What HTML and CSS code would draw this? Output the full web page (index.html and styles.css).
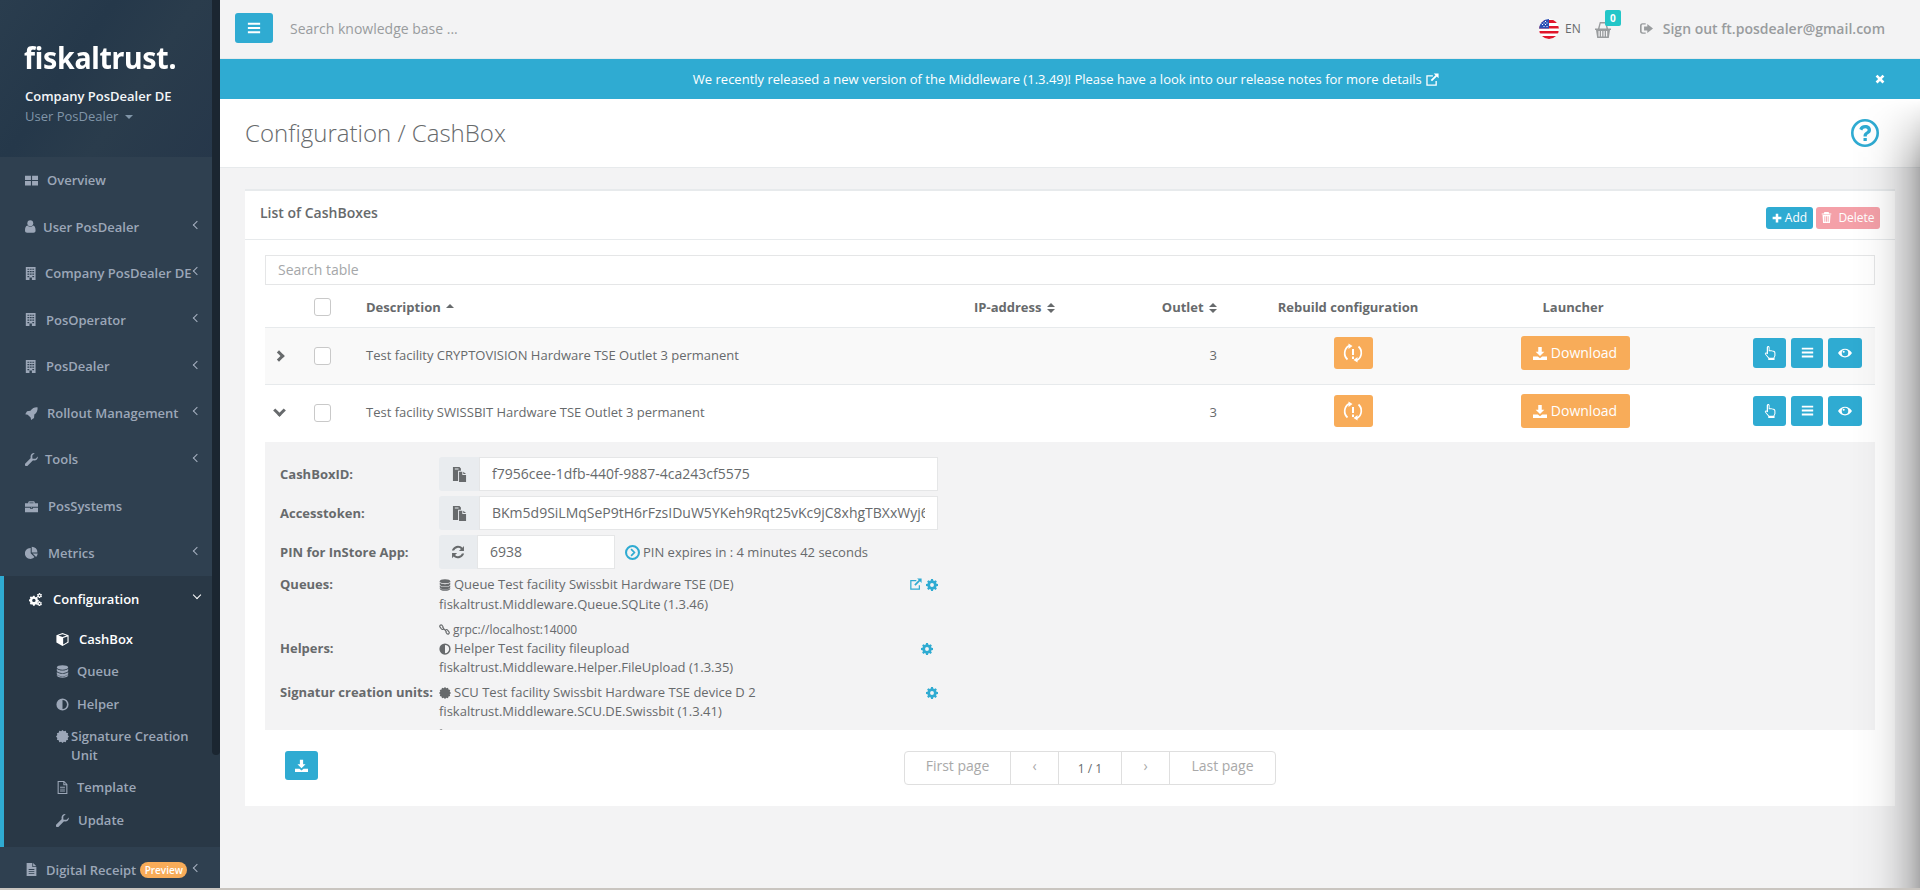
FILE: index.html
```html
<!DOCTYPE html>
<html>

<head>
    <meta charset="utf-8">
    <title>Configuration / CashBox</title>
    <link rel="stylesheet" href="styles.css">
</head>

<body>
    <!-- icon set -->
    <svg class="icon-defs" xmlns="http://www.w3.org/2000/svg">
        <symbol id="i-bars" viewBox="0 0 16 16" preserveAspectRatio="xMinYMid meet"><path d="M1 2h14v2.400H1zM1 6.800h14v2.400H1zM1 11.600h14V14H1z"/></symbol>
        <symbol id="i-th" viewBox="0 0 16 16" preserveAspectRatio="xMinYMid meet"><path d="M0 2h7.300v5.400H0zM8.700 2H16v5.400H8.700zM0 8.700h7.300V14H0zM8.700 8.700H16V14H8.700z"/></symbol>
        <symbol id="i-user" viewBox="0 0 16 16" preserveAspectRatio="xMinYMid meet"><circle cx="6.500" cy="4" r="3.600"/><path d="M0 13c0-3.600 1-6 3-6.200 1 1 2.200 1.500 3.500 1.500S9 7.800 10 6.800c2 .2 3 2.600 3 6.200 0 1.700-1 2.800-2.700 2.800H2.700C1 15.800 0 14.700 0 13z"/></symbol>
        <symbol id="i-building" viewBox="0 0 16 16" preserveAspectRatio="xMinYMid meet"><path fill-rule="evenodd" d="M1 0h12v16H1zM3 2v1.500h2.200V2zM6 2v1.500h2.200V2zM9 2v1.500h2.200V2zM3 5v1.500h2.200V5zM6 5v1.500h2.200V5zM9 5v1.500h2.200V5zM3 8v1.500h2.200V8zM6 8v1.500h2.200V8zM9 8v1.500h2.200V8zM3 11v1.500h2.200V11zM9 11v1.500h2.200V11zM5.500 13v3h3v-3z"/></symbol>
        <symbol id="i-rocket" viewBox="0 0 16 16" preserveAspectRatio="xMinYMid meet"><path d="M15.500.5c.3 3.500-1 6.500-4 8.800l-.4 4.200L7.500 16l-.6-3-3.600-3.600-3-.6L2.500 5.100l4.200-.4C9 1.500 12 .2 15.500.5z"/></symbol>
        <symbol id="i-wrench" viewBox="0 0 16 16" preserveAspectRatio="xMinYMid meet"><path d="M15.800 4.200c.4 2.600-1.600 5-4.300 5-.6 0-1.100-.1-1.600-.3L3.200 15.600c-.8.800-2 .8-2.800 0s-.8-2 0-2.800L7.100 6.100c-.2-.5-.3-1-.3-1.600C6.800 1.800 9.200-.2 11.800.2L9 3v3.500l.5.500H13z"/></symbol>
        <symbol id="i-briefcase" viewBox="0 0 16 16" preserveAspectRatio="xMinYMid meet"><path fill-rule="evenodd" d="M5 1.500h6l1 1V4h4v4.400H0V4h4V2.500zM5.500 3v1h5V3zM0 9.500h6.500V11h3V9.500H16V15H0zM7.500 8.800h1V10h-1z"/></symbol>
        <symbol id="i-pie" viewBox="0 0 16 16" preserveAspectRatio="xMinYMid meet"><path d="M7 2.500V9l4.600 4.600A6.700 6.700 0 1 1 7 2.500zM8.300 8V.8a7 7 0 0 1 7 7.200zM9.300 9.300h6.400a7 7 0 0 1-2 4.200z"/></symbol>
        <symbol id="i-gears" viewBox="0 0 16 16" preserveAspectRatio="xMinYMid meet"><path fill-rule="evenodd" d="M5 3.500h2l.3 1.300 1.200.5 1.100-.7 1.400 1.400-.7 1.100.5 1.200 1.300.3v2l-1.300.3-.5 1.200.7 1.100-1.400 1.400-1.100-.7-1.200.5-.3 1.300H5l-.3-1.300-1.200-.5-1.100.7L1 12.700l.7-1.100-.5-1.200L0 10.100v-2l1.200-.3.5-1.200L1 5.500l1.400-1.400 1.100.7 1.200-.5zM6 7a2.100 2.100 0 1 0 0 4.200A2.100 2.100 0 0 0 6 7z"/><path fill-rule="evenodd" d="M13 0l.8.200.1.900.8.500.8-.3.500.8-.6.6v1l.6.600-.5.800-.8-.3-.8.500-.1.900H12l-.1-.9-.8-.5-.8.300-.5-.8.600-.6v-1l-.6-.6.500-.8.800.3.800-.5.100-.9zM13 2.300a1 1 0 1 0 0 2 1 1 0 0 0 0-2zM13 10l.8.200.1.900.8.500.8-.3.500.8-.6.600v1l.6.600-.5.800-.8-.3-.8.500-.1.900H12l-.1-.9-.8-.5-.8.300-.5-.8.600-.6v-1l-.6-.6.500-.8.800.3.800-.5.100-.9zM13 12.300a1 1 0 1 0 0 2 1 1 0 0 0 0-2z"/></symbol>
        <symbol id="i-cube" viewBox="0 0 16 16" preserveAspectRatio="xMinYMid meet"><path fill-rule="evenodd" d="M8 0l7.500 2.700v9.100L8 16 .5 11.800V2.700zM2.900 3.200L8 5l5.100-1.800L8 1.400zM8.800 6.300v7.800l5.300-3V4.400z"/></symbol>
        <symbol id="i-database" viewBox="0 0 16 16" preserveAspectRatio="xMinYMid meet"><ellipse cx="8" cy="3" rx="7" ry="2.800"/><path d="M1 4.700c1 1.500 4 2.200 7 2.200s6-.7 7-2.200v2.500c0 1.500-3 2.800-7 2.800s-7-1.300-7-2.800zM1 8.500c1 1.500 4 2.200 7 2.200s6-.7 7-2.200V11c0 1.500-3 2.800-7 2.800S1 12.500 1 11zM1 11.900c1 1.500 4 2.200 7 2.200s6-.7 7-2.200v1c0 1.500-3 2.800-7 2.800s-7-1.300-7-2.800z"/></symbol>
        <symbol id="i-adjust" viewBox="0 0 16 16" preserveAspectRatio="xMinYMid meet"><path fill-rule="evenodd" d="M8 .5a7.500 7.500 0 1 1 0 15 7.500 7.500 0 0 1 0-15zM8 2.500v11a5.500 5.500 0 0 0 0-11z"/></symbol>
        <symbol id="i-cert" viewBox="0 0 16 16" preserveAspectRatio="xMinYMid meet"><path d="M16 8L14.380 9.710 14.930 12 12.670 12.670 12 14.930 9.710 14.380 8 16 6.290 14.380 4 14.930 3.330 12.670 1.070 12 1.620 9.710 0 8 1.620 6.290 1.070 4 3.330 3.330 4 1.070 6.290 1.620 8 0 9.710 1.620 12 1.070 12.670 3.330 14.930 4 14.380 6.290z"/></symbol>
        <symbol id="i-file-o" viewBox="0 0 16 16" preserveAspectRatio="xMinYMid meet"><path fill-rule="evenodd" d="M2 0h8l4 4v12H2zM3.300 1.300v13.400h9.400V5.200H9V1.300zM10.300 1.800v2.100h2.100zM5 7.200h6v1H5zM5 9.500h6v1H5zM5 11.800h6v1H5z"/></symbol>
        <symbol id="i-file" viewBox="0 0 16 16" preserveAspectRatio="xMinYMid meet"><path fill-rule="evenodd" d="M2 0h7v5h5v11H2zM10 0l4 4h-4zM4.500 7.500v1h7v-1zM4.500 10v1h7v-1zM4.500 12.500v1h7v-1z"/></symbol>
        <symbol id="i-copy" viewBox="0 0 16 16" preserveAspectRatio="xMinYMid meet"><path fill-rule="evenodd" d="M1 0h7l1.500 1.500V4H6.500v11H1zM3 1.500v1.200h4V1.500zM7.500 5H11v3.500h4V16H7.500zM12 5l3 2.500h-3z"/></symbol>
        <symbol id="i-refresh" viewBox="0 0 16 16" preserveAspectRatio="xMinYMid meet"><path d="M14.800 1v5.800H9l2.400-2.200A4.800 4.800 0 0 0 3.500 6.300H1A7.200 7.200 0 0 1 13 3zM1.200 15V9.200H7l-2.400 2.200a4.800 4.800 0 0 0 7.900-1.700H15A7.200 7.200 0 0 1 3 13z"/></symbol>
        <symbol id="i-link" viewBox="0 0 16 16" preserveAspectRatio="xMinYMid meet"><path fill="none" stroke="currentColor" stroke-width="1.600" d="M6.500 5L4.300 1.800a2 2 0 0 0-3 2.500L3.500 7.200a2 2 0 0 0 3 .1M9.500 11l2.200 3.200a2 2 0 0 0 3-2.500l-2.200-2.900a2 2 0 0 0-3-.1M5 4.500l6 7"/></symbol>
        <symbol id="i-clock" viewBox="0 0 16 16" preserveAspectRatio="xMinYMid meet"><path fill-rule="evenodd" d="M8 0a8 8 0 1 1 0 16A8 8 0 0 1 8 0zM8 2.200a5.800 5.800 0 1 0 0 11.600A5.800 5.800 0 0 0 8 2.200z"/><path fill="none" stroke="currentColor" stroke-width="1.800" d="M6.500 4.500L10 8l-3.500 3.500"/></symbol>
        <symbol id="i-gear" viewBox="0 0 16 16" preserveAspectRatio="xMinYMid meet"><path fill-rule="evenodd" d="M6.700 0h2.600l.4 2 1.300.6 1.700-1.100 1.800 1.800-1.100 1.700.6 1.300 2 .4v2.600l-2 .4-.6 1.300 1.100 1.700-1.800 1.800-1.700-1.100-1.300.6-.4 2H6.700l-.4-2-1.300-.6-1.700 1.100-1.800-1.800 1.100-1.700-.6-1.300-2-.4V6.700l2-.4.6-1.300-1.100-1.700 1.800-1.800L5 2.600l1.300-.6zM8 5.400a2.600 2.600 0 1 0 0 5.200 2.600 2.600 0 0 0 0-5.200z"/></symbol>
        <symbol id="i-extern" viewBox="0 0 16 16" preserveAspectRatio="xMinYMid meet"><path d="M2.500 2.500H9v1.500H3v9h9V9h1.500v5.500h-12v-12z"/><path d="M10 .5h5.500V6l-2-2L8 9.500 6.500 8 12 2.500z"/></symbol>
        <symbol id="i-download" viewBox="0 0 16 16" preserveAspectRatio="xMinYMid meet"><path d="M6 1h4v5.500h3L8 11.500 3 6.500h3zM0 12h5.500L8 14l2.500-2H16v4H0z"/></symbol>
        <symbol id="i-hand" viewBox="0 0 16 16" preserveAspectRatio="xMinYMid meet"><path fill-rule="evenodd" d="M6 0c.9 0 1.500.7 1.500 1.600v3.200c1-.2 3.800.3 4.700.6 1.300.4 2 1.300 2 2.600v3l-1 2v3H6v-2L2.500 9.700C1.500 8.400 2.800 6.900 4.300 7.800V1.600C4.500.7 5.100 0 6 0zM5.700 1.600v7.700L3.600 8.500c-.5-.2-.8.2-.4.7l3.800 4.300h5l1-2.400V8c0-.8-.5-1.300-1.200-1.500-1-.3-3.500-.7-5.300-.5V1.600c0-.3-.5-.3-.8 0z"/></symbol>
        <symbol id="i-eye" viewBox="0 0 16 16" preserveAspectRatio="xMinYMid meet"><path fill-rule="evenodd" d="M8 3c3.300 0 6.200 2 8 5-1.800 3-4.700 5-8 5s-6.200-2-8-5c1.800-3 4.700-5 8-5zM8 4.300a3.700 3.700 0 1 0 0 7.400 3.700 3.700 0 0 0 0-7.400zM6.500 5.300a1.200 1.200 0 1 1 0 2.400 1.200 1.200 0 0 1 0-2.400z"/></symbol>
        <symbol id="i-plus" viewBox="0 0 16 16" preserveAspectRatio="xMinYMid meet"><path d="M6 1h4v5h5v4h-5v5H6v-5H1V6h5z"/></symbol>
        <symbol id="i-trash" viewBox="0 0 16 16" preserveAspectRatio="xMinYMid meet"><path fill-rule="evenodd" d="M5 0h6l1 2h3v1.500H1V2h3zM2.200 4.500h11.600L13 16H3zM5 6v8h1.200V6zM7.400 6v8h1.200V6zM9.800 6v8H11V6z"/></symbol>
        <symbol id="i-close" viewBox="0 0 16 16" preserveAspectRatio="xMinYMid meet"><path d="M4 1l4 4 4-4 3 3-4 4 4 4-3 3-4-4-4 4-3-3 4-4-4-4z"/></symbol>
        <symbol id="i-help" viewBox="0 0 28 28" preserveAspectRatio="xMinYMid meet"><path fill-rule="evenodd" d="M14 0a14 14 0 1 1 0 28A14 14 0 0 1 14 0zM14 2.600a11.400 11.400 0 1 0 0 22.800 11.400 11.400 0 0 0 0-22.800zM14.200 6c3.400 0 5.800 2 5.800 4.900 0 2-1 3.100-2.700 4.200-1.200.8-1.500 1.200-1.500 2.400h-3.300c0-2.100.6-3.200 2.300-4.400 1.300-.9 1.800-1.300 1.800-2.100 0-1-.9-1.700-2.300-1.700-1.500 0-2.500.8-3 2.200L8.300 10C9.100 7.500 11.200 6 14.200 6zM12.500 19h3.300v3h-3.300z"/></symbol>
        <symbol id="i-signout" viewBox="0 0 16 16" preserveAspectRatio="xMinYMid meet"><path fill-rule="evenodd" d="M3 1.500h4V3H3.500c-.8 0-1.500.7-1.500 1.500v7c0 .8.700 1.500 1.500 1.500H7v1.500H3c-1.700 0-3-1.300-3-3v-7c0-1.700 1.300-3 3-3z"/><path d="M9 2.500L16 8l-7 5.500v-3H5v-5h4z"/></symbol>
        <symbol id="i-basket" viewBox="0 0 16 16" preserveAspectRatio="xMinYMid meet"><path fill-rule="evenodd" d="M4.800 0h6.400l1.800 6.500H16V8h-1l-1.200 8H2.200L1 8H0V6.500h3zM5.700 1.500L4.500 6.500h7l-1.200-5zM3.500 9v5.500h1.200V9zM6 9v5.500h1.200V9zM8.500 9v5.500h1.200V9zM11 9v5.500h1.200V9z"/></symbol>
        <symbol id="i-rebuild" viewBox="0 0 20 20" preserveAspectRatio="xMinYMid meet"><path d="M9 6h2v6H9zM9 13.500h2V16H9zM5.500 .5L9.500 3 5.500 6zM14.500 14L10.500 17l4 2.500z"/><path fill="none" stroke="currentColor" stroke-width="1.700" d="M4.500 16.500A8.500 8.500 0 0 1 6 2.800M15.500 3.500A8.500 8.500 0 0 1 14 17.200"/></symbol>
    </svg>

    <div class="page">
        <nav class="sidebar">
            <div class="nav-header">
                <div class="logo">fiskaltrust.</div>
                <div class="company">Company PosDealer DE</div>
                <div class="profile">User PosDealer <span class="caret"></span></div>
            </div>
            <ul class="nav">
                <li><a><svg class="nav-icon" width="22" height="13"><use href="#i-th"/></svg>Overview</a></li>
                <li><a><svg class="nav-icon" width="18" height="13"><use href="#i-user"/></svg>User PosDealer<span class="angle"></span></a></li>
                <li><a><svg class="nav-icon" width="20" height="13"><use href="#i-building"/></svg>Company PosDealer DE<span class="angle"></span></a></li>
                <li><a><svg class="nav-icon" width="21" height="13"><use href="#i-building"/></svg>PosOperator<span class="angle"></span></a></li>
                <li><a><svg class="nav-icon" width="21" height="13"><use href="#i-building"/></svg>PosDealer<span class="angle"></span></a></li>
                <li><a><svg class="nav-icon" width="22" height="13"><use href="#i-rocket"/></svg>Rollout Management<span class="angle"></span></a></li>
                <li><a><svg class="nav-icon" width="20" height="13"><use href="#i-wrench"/></svg>Tools<span class="angle"></span></a></li>
                <li><a><svg class="nav-icon" width="23" height="13"><use href="#i-briefcase"/></svg>PosSystems</a></li>
                <li><a><svg class="nav-icon" width="23" height="13"><use href="#i-pie"/></svg>Metrics<span class="angle"></span></a></li>
                <li class="active">
                    <a><svg class="nav-icon" width="24" height="13"><use href="#i-gears"/></svg>Configuration<span class="angle angle-open"></span></a>
                    <ul class="subnav">
                        <li class="current"><a><svg class="nav-icon" width="23" height="13"><use href="#i-cube"/></svg>CashBox</a></li>
                        <li><a><svg class="nav-icon" width="21" height="13"><use href="#i-database"/></svg>Queue</a></li>
                        <li><a><svg class="nav-icon" width="21" height="13"><use href="#i-adjust"/></svg>Helper</a></li>
                        <li><a><svg class="nav-icon" width="15" height="13"><use href="#i-cert"/></svg><span>Signature Creation Unit</span></a></li>
                        <li><a><svg class="nav-icon" width="21" height="13"><use href="#i-file-o"/></svg>Template</a></li>
                        <li><a><svg class="nav-icon" width="22" height="13"><use href="#i-wrench"/></svg>Update</a></li>
                    </ul>
                </li>
                <li><a><svg class="nav-icon" width="21" height="13"><use href="#i-file"/></svg>Digital Receipt<span class="badge-preview">Preview</span><span class="angle"></span></a></li>
            </ul>
            <div class="nav-scrollbar"></div>
        </nav>

        <div class="main">
            <div class="topbar">
                <a class="btn btn-info toggle"><svg width="14" height="14"><use href="#i-bars"/></svg></a>
                <div class="kb-search">Search knowledge base ...</div>
                <div class="top-right">
                    <svg class="flag" width="20" height="20" viewBox="0 0 20 20">
                        <clipPath id="flag-clip"><circle cx="10" cy="10" r="10"/></clipPath>
                        <g clip-path="url(#flag-clip)">
                            <rect width="20" height="20" fill="#fff"/>
                            <rect y="1" width="20" height="3" fill="#e0162b"/>
                            <rect y="7" width="20" height="2.500" fill="#e0162b"/>
                            <rect y="12" width="20" height="2.500" fill="#e0162b"/>
                            <rect y="17" width="20" height="3" fill="#e0162b"/>
                            <rect width="10" height="9.500" fill="#2a4fb5"/>
                            <path d="M3 2h1v1H3zM6 2h1v1H6zM3 5h1v1H3zM6 5h1v1H6zM1.500 3.500h1v1h-1zM4.500 3.500h1v1h-1zM7.500 3.500h1v1h-1zM4.500 7h1v1h-1zM7.500 7h1v1h-1z" fill="#fff"/>
                        </g>
                    </svg>
                    <span class="lang">EN</span>
                    <span class="cart"><svg width="16" height="16"><use href="#i-basket"/></svg><span class="cart-count">0</span></span>
                    <span class="signout"><svg width="13" height="13"><use href="#i-signout"/></svg>Sign out ft.posdealer@gmail.com</span>
                </div>
            </div>

            <div class="notice">
                <span>We recently released a new version of the Middleware (1.3.49)! Please have a look into our release notes for more details <svg width="14" height="14"><use href="#i-extern"/></svg></span>
                <svg class="notice-close" width="10" height="10"><use href="#i-close"/></svg>
            </div>

            <div class="page-heading">
                <h2>Configuration / CashBox</h2>
                <svg class="help" width="28" height="28"><use href="#i-help"/></svg>
            </div>

            <div class="content">
                <div class="card">
                    <div class="card-title">
                        <h5>List of CashBoxes</h5>
                        <div class="card-tools">
                            <a class="btn btn-info btn-xs btn-add"><svg width="10" height="10"><use href="#i-plus"/></svg>Add</a>
                            <a class="btn btn-danger btn-xs btn-delete"><svg width="11" height="11"><use href="#i-trash"/></svg>Delete</a>
                        </div>
                    </div>
                    <div class="card-body">
                        <div class="table-search">Search table</div>
                        <table class="grid">
                            <colgroup>
                                <col class="col-exp"><col class="col-check"><col class="col-desc"><col class="col-ip">
                                <col class="col-outlet"><col class="col-rebuild"><col class="col-launch"><col class="col-actions">
                            </colgroup>
                            <thead>
                                <tr>
                                    <th></th>
                                    <th><span class="check"></span></th>
                                    <th>Description <span class="sort-up"></span></th>
                                    <th>IP-address <span class="sort"></span></th>
                                    <th class="right">Outlet <span class="sort"></span></th>
                                    <th class="center">Rebuild configuration</th>
                                    <th class="center">Launcher</th>
                                    <th></th>
                                </tr>
                            </thead>
                            <tbody>
                                <tr class="striped">
                                    <td><span class="chev chev-right"></span></td>
                                    <td><span class="check"></span></td>
                                    <td>Test facility CRYPTOVISION Hardware TSE Outlet 3 permanent</td>
                                    <td></td>
                                    <td class="right">3</td>
                                    <td class="center"><a class="btn btn-warning btn-rebuild"><svg width="20" height="20"><use href="#i-rebuild"/></svg></a></td>
                                    <td class="center"><a class="btn btn-warning btn-download"><svg width="14" height="14"><use href="#i-download"/></svg> Download</a></td>
                                    <td class="actions">
                                        <a class="btn btn-info btn-act w33"><svg width="14" height="14"><use href="#i-hand"/></svg></a>
                                        <a class="btn btn-info btn-act w32"><svg width="13" height="13"><use href="#i-bars"/></svg></a>
                                        <a class="btn btn-info btn-act w34"><svg width="14" height="14"><use href="#i-eye"/></svg></a>
                                    </td>
                                </tr>
                                <tr>
                                    <td><span class="chev chev-down"></span></td>
                                    <td><span class="check"></span></td>
                                    <td>Test facility SWISSBIT Hardware TSE Outlet 3 permanent</td>
                                    <td></td>
                                    <td class="right">3</td>
                                    <td class="center"><a class="btn btn-warning btn-rebuild"><svg width="20" height="20"><use href="#i-rebuild"/></svg></a></td>
                                    <td class="center"><a class="btn btn-warning btn-download"><svg width="14" height="14"><use href="#i-download"/></svg> Download</a></td>
                                    <td class="actions">
                                        <a class="btn btn-info btn-act w33"><svg width="14" height="14"><use href="#i-hand"/></svg></a>
                                        <a class="btn btn-info btn-act w32"><svg width="13" height="13"><use href="#i-bars"/></svg></a>
                                        <a class="btn btn-info btn-act w34"><svg width="14" height="14"><use href="#i-eye"/></svg></a>
                                    </td>
                                </tr>
                            </tbody>
                        </table>

                        <div class="detail">
                            <div class="detail-inner">
                                <div class="field">
                                    <label>CashBoxID:</label>
                                    <div class="input-group">
                                        <span class="addon"><svg width="15" height="15"><use href="#i-copy"/></svg></span>
                                        <span class="value"><span>f7956cee-1dfb-440f-9887-4ca243cf5575</span></span>
                                    </div>
                                </div>
                                <div class="field">
                                    <label>Accesstoken:</label>
                                    <div class="input-group">
                                        <span class="addon"><svg width="15" height="15"><use href="#i-copy"/></svg></span>
                                        <span class="value"><span>BKm5d9SiLMqSeP9tH6rFzsIDuW5YKeh9Rqt25vKc9jC8xhgTBXxWyj6</span></span>
                                    </div>
                                </div>
                                <div class="field">
                                    <label>PIN for InStore App:</label>
                                    <div class="input-group pin">
                                        <span class="addon"><svg width="14" height="14"><use href="#i-refresh"/></svg></span>
                                        <span class="value"><span>6938</span></span>
                                    </div>
                                    <span class="pin-note"><svg width="15" height="15"><use href="#i-clock"/></svg>PIN expires in : 4 minutes 42 seconds</span>
                                </div>
                                <div class="item item-queue">
                                    <label>Queues:</label>
                                    <div class="item-text">
                                        <div><svg width="12" height="12"><use href="#i-database"/></svg>Queue Test facility Swissbit Hardware TSE (DE)</div>
                                        <div>fiskaltrust.Middleware.Queue.SQLite (1.3.46)</div>
                                        <div class="url"><svg width="11" height="11"><use href="#i-link"/></svg>grpc://localhost:14000</div>
                                    </div>
                                    <div class="item-tools"><svg width="13" height="13"><use href="#i-extern"/></svg><svg width="12" height="12"><use href="#i-gear"/></svg></div>
                                </div>
                                <div class="item item-helper">
                                    <label>Helpers:</label>
                                    <div class="item-text">
                                        <div><svg width="12" height="12"><use href="#i-adjust"/></svg>Helper Test facility fileupload</div>
                                        <div>fiskaltrust.Middleware.Helper.FileUpload (1.3.35)</div>
                                    </div>
                                    <div class="item-tools tools-inset"><svg width="12" height="12"><use href="#i-gear"/></svg></div>
                                </div>
                                <div class="item item-scu">
                                    <label>Signatur creation units:</label>
                                    <div class="item-text">
                                        <div><svg width="12" height="12"><use href="#i-cert"/></svg>SCU Test facility Swissbit Hardware TSE device D 2</div>
                                        <div>fiskaltrust.Middleware.SCU.DE.Swissbit (1.3.41)</div>
                                        <div class="url"><svg width="11" height="11"><use href="#i-link"/></svg></div>
                                    </div>
                                    <div class="item-tools"><svg width="12" height="12"><use href="#i-gear"/></svg></div>
                                </div>
                            </div>
                        </div>

                        <div class="table-footer">
                            <a class="btn btn-info btn-export"><svg width="13" height="13"><use href="#i-download"/></svg></a>
                            <div class="pager">
                                <span class="pg pg-first">First page</span>
                                <span class="pg pg-prev">‹</span>
                                <span class="pg pg-count">1 / 1</span>
                                <span class="pg pg-next">›</span>
                                <span class="pg pg-last">Last page</span>
                            </div>
                        </div>
                    </div>
                </div>
            </div>
        </div>
    </div>
    <div class="side-shadow"></div>
    <div class="bottom-edge"></div>
</body>
</html>
```

FILE: styles.css
```css
* {
    box-sizing: border-box;
}

html,
body {
    height: 100%;
    margin: 0;
}

html {
    overflow: hidden;
}

body {
    font-family: "Open Sans", "Liberation Sans", sans-serif;
    font-size: 13px;
    line-height: 1.42857;
    color: #676a6c;
    background: #f3f3f4;
    overflow: hidden;
    position: relative;
}

svg {
    fill: currentColor;
    vertical-align: middle;
}

.icon-defs {
    display: none;
}

.page {
    display: flex;
    height: 890px;
    overflow: hidden;
}

/* sidebar */
.sidebar {
    width: 220px;
    flex: none;
    background: #2f4050;
    position: relative;
    overflow: hidden;
}

.nav-header {
    height: 157px;
    padding: 38px 25px 0;
    background: linear-gradient(125deg, #2a3d4e 0%, #25384a 35%, #2a3c4c 60%, #26374a 100%);
}

.logo {
    font-family: "Noto Sans", "Open Sans", sans-serif;
    font-size: 31px;
    font-weight: 700;
    line-height: 38px;
    letter-spacing: -0.3px;
    color: #fff;
    margin-left: -1px;
    transform: scaleX(0.92);
    transform-origin: left center;
}

.company {
    color: #f4f6f8;
    font-weight: 600;
    margin-top: 11px;
}

.profile {
    color: #8095a8;
    margin-top: 1px;
}

.caret {
    display: inline-block;
    margin-left: 3px;
    vertical-align: middle;
    border-top: 4px solid #8095a8;
    border-left: 4px solid transparent;
    border-right: 4px solid transparent;
}

.nav,
.subnav {
    list-style: none;
    margin: 0;
    padding: 0;
}

.nav a {
    display: flex;
    align-items: center;
    padding: 14px 20px 14px 25px;
    font-weight: 600;
    color: #9ca7b8;
    white-space: nowrap;
}

.nav-icon {
    flex: none;
}

.angle {
    margin-left: auto;
    margin-bottom: 4px;
    width: 6px;
    height: 6px;
    border-left: 1px solid #a7b1c2;
    border-bottom: 1px solid #a7b1c2;
    transform: rotate(45deg);
    flex: none;
}

.angle-open {
    transform: rotate(-45deg);
    border-color: #fff;
    border-width: 1.5px;
    margin-bottom: 8px;
}

.active {
    background: #293846;
    border-left: 4px solid #2fabd2;
}

.nav .active > a {
    color: #fff;
    padding-left: 25px;
}

.subnav {
    padding-bottom: 10px;
}

.nav .subnav a {
    padding: 7px 10px 7px 52px;
    align-items: flex-start;
    white-space: normal;
}

.subnav .nav-icon {
    margin-top: 3px;
}

.nav .subnav .current a {
    color: #fff;
}

.badge-preview {
    width: 47px;
    height: 16px;
    margin-left: 4px;
    border-radius: 8px;
    background: #f8ac59;
    color: #fff;
    font-size: 10px;
    line-height: 16px;
    text-align: center;
}

.nav-scrollbar {
    position: absolute;
    top: 0;
    right: 0;
    width: 8px;
    height: 755px;
    background: #1b2631;
    border-radius: 0 0 4px 4px;
}

/* top bar */
.main {
    flex: 1;
    min-width: 0;
}

.topbar {
    height: 59px;
    display: flex;
    align-items: center;
    padding: 0 35px 0 15px;
    border-bottom: 1px solid #e7eaec;
}

.btn {
    display: inline-flex;
    align-items: center;
    justify-content: center;
    border-radius: 3px;
    color: #fff;
}

.btn-info {
    background: #2fabd2;
}

.btn-warning {
    background: #f8ac59;
}

.btn-danger {
    background: #f4a0a8;
}

.toggle {
    width: 38px;
    height: 30px;
    margin-top: -3px;
}

.kb-search {
    margin-left: 17px;
    font-size: 14px;
    color: #999c9e;
    margin-top: -1px;
}

.top-right {
    margin-left: auto;
    display: flex;
    align-items: center;
}

.flag {
    margin-right: 6px;
}

.lang {
    color: #676a6c;
    font-size: 12px;
    margin-right: 14px;
}

.cart {
    position: relative;
    color: #999c9e;
    display: flex;
    margin-right: 29px;
    margin-top: 1px;
}

.cart-count {
    position: absolute;
    left: 10px;
    top: -12px;
    width: 16px;
    height: 16px;
    border-radius: 2px;
    background: #23c6c8;
    color: #fff;
    font-size: 10px;
    font-weight: 700;
    line-height: 16px;
    text-align: center;
}

.signout {
    font-size: 14px;
    font-weight: 600;
    color: #999c9e;
    display: flex;
    align-items: center;
    gap: 10px;
}

/* release notice */
.notice {
    height: 40px;
    padding-right: 8px;
    background: #2fabd2;
    color: #fff;
    display: flex;
    align-items: center;
    justify-content: center;
    position: relative;
}

.notice-close {
    position: absolute;
    right: 35px;
    top: 15px;
}

/* heading */
.page-heading {
    height: 69px;
    background: #fff;
    border-bottom: 1px solid #e7eaec;
    display: flex;
    align-items: center;
    justify-content: space-between;
    padding: 0 41px 0 25px;
}

.page-heading h2 {
    margin: 0;
    font-size: 24px;
    font-weight: 100;
    color: #676a6c;
}

.help {
    color: #2fabd2;
}

/* card */
.content {
    padding: 21px 25px 0;
}

.card {
    background: #fff;
    border-top: 2px solid #e7eaec;
    height: 617px;
}

.card-title {
    height: 49px;
    padding: 0 15px;
    display: flex;
    align-items: center;
    justify-content: space-between;
    border-bottom: 1px solid #e7eaec;
}

.card-title h5 {
    margin: 0 0 4px;
    font-size: 14px;
    font-weight: 600;
    color: #676a6c;
}

.card-tools {
    display: flex;
    gap: 3px;
    margin-top: 5px;
}

.btn-xs {
    height: 22px;
    font-size: 12px;
}

.btn-add {
    width: 47px;
    gap: 3px;
}

.btn-delete {
    width: 64px;
    gap: 6px;
}

.card-body {
    padding: 15px 20px;
}

.table-search {
    height: 30px;
    border: 1px solid #e5e6e7;
    padding: 0 12px;
    font-size: 14px;
    line-height: 28px;
    color: #a5a7a9;
}

.grid {
    width: 100%;
    table-layout: fixed;
    border-collapse: collapse;
}

.col-exp { width: 40px; }
.col-check { width: 53px; }
.col-desc { width: 608px; }
.col-ip { width: 164px; }
.col-outlet { width: 95px; }
.col-rebuild { width: 246px; }
.col-launch { width: 204px; }

.grid th {
    height: 42px;
    padding: 3px 8px 0;
    font-weight: 700;
    text-align: left;
    border-bottom: 1px solid #e7eaec;
}

.grid td {
    height: 57.5px;
    padding: 0 8px;
    border-bottom: 1px solid #e7eaec;
}

.grid tbody tr:last-child td {
    border-bottom: 0;
    padding-bottom: 2px;
}

.grid .right {
    text-align: right;
}

.grid .center {
    text-align: center;
}

.grid .btn {
    margin-bottom: 6px;
}

.grid tbody tr:last-child .btn {
    margin-bottom: 4px;
}

.striped {
    background: #f9f9f9;
}

.check {
    display: block;
    width: 17px;
    height: 18px;
    margin-left: 1px;
    border: 1px solid #c9c9c9;
    border-radius: 3px;
    background: #fff;
}

.sort-up,
.sort {
    display: inline-block;
    vertical-align: middle;
    margin-left: 2px;
    border-left: 4px solid transparent;
    border-right: 4px solid transparent;
    border-bottom: 4px solid #676a6c;
    margin-bottom: 4px;
}

.sort {
    position: relative;
    margin-bottom: 6px;
}

.sort::after {
    content: "";
    position: absolute;
    left: -4px;
    top: 6px;
    border-left: 4px solid transparent;
    border-right: 4px solid transparent;
    border-top: 4px solid #676a6c;
}

.chev {
    display: block;
}

.chev-right {
    width: 8px;
    height: 8px;
    margin-left: 2px;
    border-right: 3px solid #676a6c;
    border-bottom: 3px solid #676a6c;
    transform: rotate(-45deg);
}

.chev-down {
    width: 9px;
    height: 9px;
    margin: -4px 0 0 2px;
    border-right: 3px solid #676a6c;
    border-bottom: 3px solid #676a6c;
    transform: rotate(45deg);
}

.btn-rebuild {
    width: 39px;
    height: 32px;
    margin-left: 10px;
    vertical-align: middle;
}

.btn-download {
    width: 109px;
    height: 34px;
    margin-left: 4px;
    font-size: 14px;
    gap: 4px;
    vertical-align: middle;
}

.actions {
    text-align: right;
    white-space: nowrap;
    padding-right: 13px !important;
    font-size: 0;
}

.btn-act {
    height: 30px;
    margin-left: 5px;
    vertical-align: middle;
}

.w32 { width: 32px; }
.w33 { width: 33px; }
.w34 { width: 34px; }

/* expanded row */
.detail {
    background: #f3f3f4;
    height: 288px;
    overflow: hidden;
    padding: 15px 0 0 15px;
}

.detail-inner {
    width: 658px;
}

.detail label {
    font-weight: 700;
    width: 159px;
    flex: none;
}

.field {
    display: flex;
    align-items: center;
    margin-bottom: 5px;
}

.input-group {
    display: flex;
    flex: 1;
    height: 34px;
    min-width: 0;
}

.input-group.pin {
    flex: 0 0 176px;
}

.addon {
    width: 40px;
    flex: none;
    background: #e9ecef;
    border-radius: 3px 0 0 3px;
    display: flex;
    align-items: center;
    justify-content: center;
}

.pin .addon {
    width: 38px;
}

.value {
    flex: 1;
    min-width: 0;
    background: #fff;
    border: 1px solid #e5e6e7;
    padding: 0 12px;
    font-size: 14px;
    line-height: 32px;
}

.value span {
    display: block;
    white-space: nowrap;
    overflow: hidden;
}

.pin-note {
    margin-left: 10px;
    display: flex;
    align-items: center;
    gap: 3px;
}

.pin-note svg {
    color: #2fabd2;
}

.item {
    display: flex;
    align-items: flex-start;
}

.item-queue {
    margin-top: 6px;
}

.item-queue .item-text > div:first-child {
    margin-bottom: 1px;
}

.item-text {
    flex: 1;
    min-width: 0;
}

.item-text > div {
    line-height: 19px;
}

.item-text svg {
    margin-right: 3px;
    margin-top: -2px;
}

.item-text .url {
    font-size: 12px;
    margin-top: 7px;
    line-height: 18px;
}

.item-scu {
    margin-top: 6px;
}

.item-scu .item-text .url {
    margin-top: 5px;
}

.item-tools {
    display: flex;
    gap: 4px;
    color: #2fabd2;
    align-items: center;
    height: 19px;
}

.tools-inset {
    margin-right: 5px;
}

.table-footer {
    display: flex;
    position: relative;
    height: 36px;
    margin-top: 20px;
    padding-left: 20px;
}

.btn-export {
    width: 33px;
    height: 29px;
    margin-top: 1px;
}

.pager {
    display: flex;
    height: 34px;
    margin-left: 586px;
    margin-top: 1px;
    border: 1px solid #dfdfdf;
    border-radius: 4px;
    color: #a9a9a9;
    font-size: 14px;
    line-height: 28px;
}

.pg {
    text-align: center;
    border-right: 1px solid #dfdfdf;
}

.pg-first { width: 106px; }
.pg-prev { width: 48px; }
.pg-count { width: 63px; font-size: 12px; color: #676a6c; line-height: 34px; }
.pg-next { width: 48px; }
.pg-last { width: 105px; border-right: 0; }

/* shadow of the closed panel at the right edge, laid over the page */
.side-shadow {
    position: absolute;
    top: 99px;
    right: 0;
    bottom: 0;
    width: 70px;
    background: linear-gradient(to left, rgba(0, 0, 0, 0.3), rgba(0, 0, 0, 0.2) 14%, rgba(0, 0, 0, 0.13) 28%, rgba(0, 0, 0, 0.07) 43%, rgba(0, 0, 0, 0.035) 57%, rgba(0, 0, 0, 0.015) 71%, rgba(0, 0, 0, 0));
    -webkit-mask-image: linear-gradient(to bottom, transparent 0, #000 70px);
    mask-image: linear-gradient(to bottom, transparent 0, #000 70px);
}

.bottom-edge {
    position: absolute;
    left: 0;
    right: 0;
    bottom: 0;
    height: 2px;
    background: #c9c5c0;
}
```
